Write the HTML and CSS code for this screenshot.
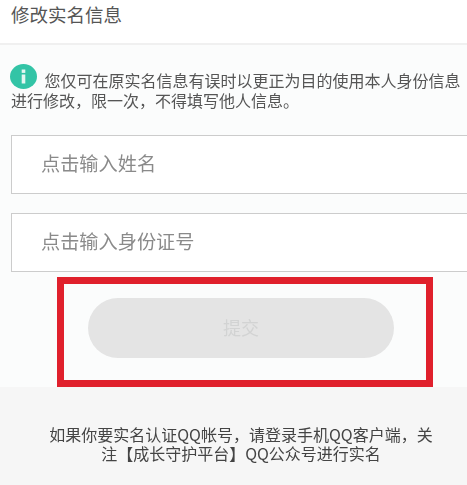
FILE: index.html

```html
<!DOCTYPE html>
<html lang="zh-CN">
<head>
  <meta charset="UTF-8" />
  <meta name="viewport" content="width=device-width, initial-scale=1.0"/>
  <title>修改实名信息</title>
  <link rel="stylesheet" href="styles.css">
</head>
<body>
  <div class="page">
    <div class="header">修改实名信息</div>

    <div class="notice">
      <svg class="notice-icon" viewBox="0 0 27 25" width="27" height="25">
        <ellipse cx="13.5" cy="12.5" rx="13.5" ry="12.5" fill="#33c4a6"/>
        <rect x="11.7" y="10.5" width="3.6" height="9" fill="#e4f7f2"/>
        <rect x="11.7" y="5.5" width="3.6" height="3.4" fill="#e4f7f2"/>
      </svg>
      <span class="notice-text">您仅可在原实名信息有误时以更正为目的使用本人身份信息进行修改，限一次，不得填写他人信息。</span>
    </div>

    <div class="field first">点击输入姓名</div>
    <div class="field">点击输入身份证号</div>

    <div class="submit-row">
      <button class="submit">提交</button>
      <div class="red-box"></div>
    </div>

    <div class="footer">
      <p>如果你要实名认证QQ帐号，请登录手机QQ客户端，关<br>注【成长守护平台】QQ公众号进行实名</p>
    </div>
  </div>
</body>
</html>
```

FILE: styles.css

```css
* {
  box-sizing: border-box;
}

body {
  margin: 0;
  font-family: "Noto Sans CJK SC", "Noto Sans", sans-serif;
  background: #fbfcfc;
}

.page {
  width: 467px;
  height: 485px;
  overflow: hidden;
  display: flex;
  flex-direction: column;
  filter: blur(0.4px);
}

.header {
  height: 45px;
  padding: 1px 0 0 11px;
  background: #fff;
  border-bottom: 2px solid #f0f0f0;
  font-size: 18.5px;
  line-height: 26px;
  color: #555;
}

.notice {
  height: 90px;
  padding: 25px 4px 0 11px;
  font-size: 16px;
  line-height: 20px;
  color: #555;
}

.notice-icon {
  vertical-align: -2px;
  margin: -10px 4px 0 -1px;
}

.field {
  height: 59px;
  margin: 19px 0 0 11px;
  padding-left: 29px;
  background: #fff;
  border: 1px solid #ccc;
  border-right: none;
  font-size: 19.2px;
  line-height: 54px;
  color: #8a8a8a;
}

.field.first {
  margin-top: 0;
}

.submit-row {
  position: relative;
  height: 115px;
  padding: 26px 0 0 88px;
}

.submit {
  display: block;
  width: 306px;
  height: 60px;
  padding: 0 0 2px;
  border: none;
  border-radius: 30px;
  background: #e4e4e4;
  font-family: inherit;
  font-size: 18px;
  color: #d2d3d3;
}

.red-box {
  position: absolute;
  top: 5px;
  left: 57px;
  width: 376px;
  height: 110px;
  border: 7px solid #e0202c;
}

.footer {
  flex: 1;
  padding: 38px 0 0 15px;
  background: #f6f6f6;
  text-align: center;
  font-size: 16px;
  line-height: 19px;
  color: #444;
}

.footer p {
  margin: 0;
}
```
